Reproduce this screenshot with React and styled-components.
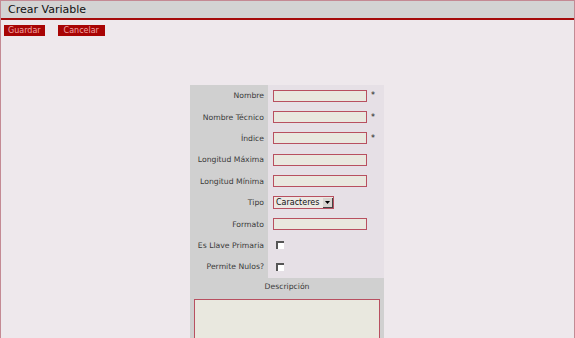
import React from "react";
import styled, { createGlobalStyle } from "styled-components";

const Global = createGlobalStyle`
  html, body { margin: 0; padding: 0; background: #eee8ec; }
  body { font-family: "DejaVu Sans", Verdana, sans-serif; }
`;

const Frame = styled.div`
  box-sizing: border-box;
  width: 575px;
  height: 338px;
  overflow: hidden;
  border: 1px solid #c48a94;
  border-bottom: none;
  background: #eee8ec;
`;

const Header = styled.div`
  height: 17px;
  background: #d3d3d3;
  border-bottom: 2px solid #a50c0c;
  display: flex;
  align-items: center;
  padding-left: 7px;
  font-size: 11px;
  color: #111;
`;

const Toolbar = styled.div`
  display: flex;
  gap: 13px;
  padding: 5px 0 0 3px;
`;

const Button = styled.button`
  all: unset;
  background: #a80404;
  color: #f2a6a6;
  font-family: "DejaVu Sans", Verdana, sans-serif;
  font-size: 8px;
  height: 11px;
  line-height: 11px;
  padding: 0 ${p => p.$pad}px;
`;

const FormArea = styled.div`
  display: flex;
  padding: 49px 0 0 189px;
`;

const Table = styled.div`
  width: 194px;
  display: grid;
  grid-template-columns: 78px 116px;
  font-size: 7.7px;
  color: #3a3a3a;
`;

const Label = styled.div`
  background: #d0d0d0;
  height: 21.4px;
  display: flex;
  align-items: center;
  justify-content: flex-end;
  padding-right: 4px;
  box-sizing: border-box;
`;

const Cell = styled.div`
  background: #e6e0e6;
  height: 21.4px;
  display: flex;
  align-items: center;
  padding-left: 5px;
  gap: 4px;
`;

const Input = styled.div`
  box-sizing: border-box;
  width: 94px;
  height: 12px;
  background: #e9e8df;
  border: 1px solid #b85060;
`;

const Star = styled.span`
  font-size: 8px;
  color: #222;
`;

const Select = styled.div`
  box-sizing: border-box;
  height: 13px;
  width: 61px;
  border: 1px solid #b85060;
  background: #ece8e4;
  display: flex;
  align-items: center;
  padding-left: 2px;
  font-size: 8px;
  color: #111;
  justify-content: space-between;
`;

const Arrow = styled.div`
  width: 9px;
  height: 9px;
  background: #d8d4d0;
  border-right: 1px solid #444;
  border-bottom: 1px solid #444;
  display: flex;
  align-items: center;
  justify-content: center;
`;

const Check = styled.div`
  box-sizing: border-box;
  width: 8px;
  height: 8px;
  border-top: 2px solid #555;
  border-left: 2px solid #555;
  background: #fff;
  margin-left: 3px;
`;

const FullRow = styled.div`
  grid-column: 1 / span 2;
  background: #d0d0d0;
  height: 18px;
  display: flex;
  align-items: center;
  justify-content: center;
`;

const TextAreaWrap = styled.div`
  grid-column: 1 / span 2;
  background: #d0d0d0;
  padding: 3px 4px 0 4px;
  height: 60px;
`;

const TextArea = styled.div`
  box-sizing: border-box;
  height: 100%;
  background: #e9e8df;
  border: 1px solid #b85060;
`;

const rows = [
  { label: "Nombre", kind: "input", req: true },
  { label: "Nombre Técnico", kind: "input", req: true },
  { label: "Índice", kind: "input", req: true },
  { label: "Longitud Máxima", kind: "input" },
  { label: "Longitud Mínima", kind: "input" },
  { label: "Tipo", kind: "select" },
  { label: "Formato", kind: "input" },
  { label: "Es Llave Primaria", kind: "check" },
  { label: "Permite Nulos?", kind: "check" },
];

export default function App() {
  return (
    <>
      <Global />
      <Frame>
        <Header>Crear Variable</Header>
        <Toolbar>
          <Button $pad={4}>Guardar</Button>
          <Button $pad={6}>Cancelar</Button>
        </Toolbar>
        <FormArea>
          <Table>
            {rows.map(r => (
              <React.Fragment key={r.label}>
                <Label>{r.label}</Label>
                <Cell>
                  {r.kind === "input" && <Input />}
                  {r.kind === "input" && r.req && <Star>*</Star>}
                  {r.kind === "select" && (
                    <Select>
                      Caracteres
                      <Arrow>
                        <svg width="5" height="3" viewBox="0 0 5 3"><path d="M0 0h5L2.5 3z" fill="#000" /></svg>
                      </Arrow>
                    </Select>
                  )}
                  {r.kind === "check" && <Check />}
                </Cell>
              </React.Fragment>
            ))}
            <FullRow>Descripción</FullRow>
            <TextAreaWrap><TextArea /></TextAreaWrap>
          </Table>
        </FormArea>
      </Frame>
    </>
  );
}
